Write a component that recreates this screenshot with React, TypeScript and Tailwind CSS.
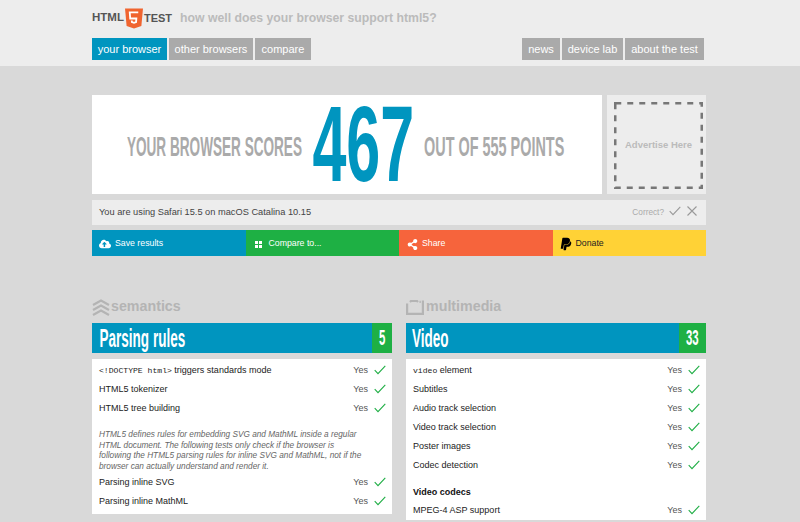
import { FaCloudUploadAlt, FaPaypal, FaShareAlt } from "react-icons/fa";

const sans = "font-['Helvetica_Neue','Liberation_Sans',Arial,sans-serif]";

function Check({ className = "mb-[2px] text-[#1fae45]" }: { className?: string }) {
  return (
    <svg width="12" height="10" viewBox="0 0 12 10" className={className} fill="none" stroke="currentColor" strokeWidth="1.1">
      <path d="M0.7 5.2 L4 8.6 L11.3 0.8" />
    </svg>
  );
}

function Condensed({ width, scale, className, children }: { width: number; scale: number; className: string; children: string }) {
  return (
    <span className={`flex shrink-0 justify-center whitespace-nowrap font-bold ${className}`} style={{ width }}>
      <span className="inline-block" style={{ transform: `scaleX(${scale})` }}>
        {children}
      </span>
    </span>
  );
}

function Row({ label, code }: { label: string; code?: string }) {
  return (
    <div className="flex h-[19px] items-center justify-between pl-[7px] pr-[6px] text-[9px] text-[#222]">
      <span>
        {code && <code className="font-['Liberation_Mono',monospace] text-[8.1px]">{code}</code>}
        {label}
      </span>
      <span className="flex items-center gap-[6px] text-[#555]">
        Yes
        <Check />
      </span>
    </div>
  );
}

function PanelHead({ title, titleW, score, scoreW, numW }: { title: string; titleW: number; score: string; scoreW: number; numW: number }) {
  return (
    <div className="flex h-[30px] items-center justify-between bg-[#0095bf] text-white">
      <div className="pl-[7px]">
        <Condensed width={titleW} scale={0.52} className="text-[26px] leading-[30px]">
          {title}
        </Condensed>
      </div>
      <div className="flex h-full items-center justify-center bg-[#1eb044]" style={{ width: scoreW }}>
        <Condensed width={numW} scale={0.52} className="text-[22px] leading-[30px]">
          {score}
        </Condensed>
      </div>
    </div>
  );
}

function Tab({ label, width, active }: { label: string; width: number; active?: boolean }) {
  return (
    <a className={`flex h-[22px] items-center justify-center text-[11px] text-white ${active ? "bg-[#0095bf]" : "bg-[#aaa]"}`} style={{ width }}>
      {label}
    </a>
  );
}

function Action({ icon, label, className }: { icon: React.ReactNode; label: string; className: string }) {
  return (
    <a className={`flex h-[26px] flex-1 items-center gap-[4px] pl-[7px] pt-[2px] text-[8.75px] ${className}`}>
      <span className="flex w-[12px] justify-center">{icon}</span>
      {label}
    </a>
  );
}

export default function App() {
  return (
    <div className={`h-[522px] overflow-hidden bg-[#d9d9d9] ${sans}`}>
      <header className="h-[66px] bg-[#ededed] pl-[92px] pr-[96px]">
        <div className="flex h-[36px] items-center">
          <span className="text-[11.5px] font-bold text-[#555]">HTML</span>
          <svg width="18" height="21" viewBox="0 0 19 21" className="ml-[1px] mr-[1px]">
            <path d="M0 0 H19 L17.3 18.3 L9.5 21 L1.7 18.3 Z" fill="#f0642f" />
            <path d="M14 4 H5 L5.5 10.5 H12 L11.7 14.3 L9.5 15 L7.3 14.3 L7.1 12.6" fill="none" stroke="#fff" strokeWidth="1.9" />
          </svg>
          <span className="text-[11px] font-bold text-[#555]">TEST</span>
          <span className="ml-[8px] text-[12.25px] font-bold text-[#bbb]">how well does your browser support html5?</span>
        </div>
        <nav className="mt-[2px] flex justify-between">
          <div className="flex gap-[2px]">
            <Tab label="your browser" width={75} active />
            <Tab label="other browsers" width={84} />
            <Tab label="compare" width={56} />
          </div>
          <div className="flex gap-[2px]">
            <Tab label="news" width={38} />
            <Tab label="device lab" width={61} />
            <Tab label="about the test" width={79} />
          </div>
        </nav>
      </header>

      <main className="mx-[92px] w-[614px] pt-[29px]">
        <div className="flex h-[99px] gap-[5px]">
          <div className="flex w-[510px] items-center bg-white pl-[35px] text-[#aaa]">
            <Condensed width={174} scale={0.485} className="mt-[4px] text-[28px]">
              YOUR BROWSER SCORES
            </Condensed>
            <Condensed width={101} scale={0.57} className="ml-[12px] text-[107px] leading-[99px] text-[#0095bf]">
              467
            </Condensed>
            <Condensed width={141} scale={0.515} className="ml-[10px] mt-[4px] text-[28px]">
              OUT OF 555 POINTS
            </Condensed>
          </div>
          <div className="w-[99px] bg-[#ededed] pb-[5px] pl-[7px] pr-[3px] pt-[7px]">
            <div className="relative flex h-full items-center justify-center text-[9.5px] font-bold text-[#bbb]">
              <svg width="89" height="87" viewBox="0 0 89 87" className="absolute left-0 top-0" fill="none" stroke="#777" strokeWidth="2.5">
                <rect x="1.25" y="1.25" width="86.5" height="84.5" strokeDasharray="6 6" />
              </svg>
              Advertise Here
            </div>
          </div>
        </div>

        <div className="mt-[6px] flex h-[25px] items-center justify-between bg-[#ededed] pl-[7px] pr-[9px] text-[9.25px] text-[#444]">
          <span>You are using Safari 15.5 on macOS Catalina 10.15</span>
          <span className="flex items-center gap-[5px] text-[8.25px] text-[#aaa]">
            <span className="mt-[2px]">Correct?</span>
            <Check className="mb-[3px] text-[#999]" />
            <svg width="10" height="10" viewBox="0 0 10 10" className="mb-[3px] ml-[1px] text-[#999]" stroke="currentColor" strokeWidth="1.1">
              <path d="M0.5 0.5 L9.5 9.5 M9.5 0.5 L0.5 9.5" />
            </svg>
          </span>
        </div>

        <div className="mt-[5px] flex text-white">
          <Action className="bg-[#0095bf]" label="Save results" icon={<FaCloudUploadAlt size={14} />} />
          <Action
            className="bg-[#1eb044]"
            label="Compare to..."
            icon={
              <svg width="7" height="7" viewBox="0 0 7 7" fill="#fff">
                <path d="M0 0h3v3H0zM4 0h3v3H4zM0 4h3v3H0zM4 4h3v3H4z" />
              </svg>
            }
          />
          <Action className="bg-[#f6643c]" label="Share" icon={<FaShareAlt size={11} />} />
          <Action className="bg-[#ffd236] text-[#222]" label="Donate" icon={<FaPaypal size={14} className="text-black" />} />
        </div>

        <div className="mt-[41px] flex gap-[14px]">
          <section className="w-[300px]">
            <h2 className="flex h-[20px] items-center gap-[1px] text-[14.25px] font-bold text-[#b4b4b4]">
              <svg width="18" height="17" viewBox="0 0 18 17" fill="none" stroke="#b4b4b4" strokeWidth="2.2">
                <path d="M1 6 L9 1.5 L17 6 M1 11 L9 6.5 L17 11 M1 16 L9 11.5 L17 16" />
              </svg>
              semantics
            </h2>
            <div className="mt-[6px]">
              <PanelHead title="Parsing rules" titleW={86} score="5" scoreW={20} numW={8} />
            </div>
            <div className="mt-[6px] bg-white pb-[3px] pt-[2px]">
              <Row code="<!DOCTYPE html>" label=" triggers standards mode" />
              <Row label="HTML5 tokenizer" />
              <Row label="HTML5 tree building" />
              <p className="w-[275px] pb-[1px] pl-[7px] pt-[12px] text-[8.25px] italic leading-[10.5px] text-[#666]">
                HTML5 defines rules for embedding SVG and MathML inside a regular HTML document. The following tests only check if the browser is following the HTML5 parsing rules for inline SVG and MathML, not if the browser can actually understand and render it.
              </p>
              <Row label="Parsing inline SVG" />
              <Row label="Parsing inline MathML" />
            </div>
          </section>

          <section className="w-[300px]">
            <h2 className="flex h-[20px] items-center gap-[2px] text-[14.25px] font-bold text-[#b4b4b4]">
              <svg width="18" height="15" viewBox="0 0 18 15" fill="none" stroke="#b4b4b4" strokeWidth="2.2">
                <path d="M1.1 3.5 V13.9 H16.9 V0.5 M4 2 L5 1 H11 L12 2 M13.5 1.8 H14.8" />
              </svg>
              multimedia
            </h2>
            <div className="mt-[6px]">
              <PanelHead title="Video" titleW={35} score="33" scoreW={27} numW={14} />
            </div>
            <div className="mt-[6px] bg-white pt-[2px]">
              <Row code="video" label=" element" />
              <Row label="Subtitles" />
              <Row label="Audio track selection" />
              <Row label="Video track selection" />
              <Row label="Poster images" />
              <Row label="Codec detection" />
              <h3 className="px-[7px] pb-[2px] pt-[10px] text-[9px] font-bold leading-[14px] text-[#111]">Video codecs</h3>
              <Row label="MPEG-4 ASP support" />
            </div>
          </section>
        </div>
      </main>
    </div>
  );
}
